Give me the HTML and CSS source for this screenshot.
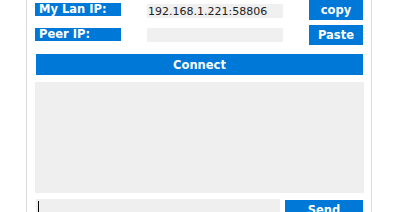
FILE: index.html
```html
<!DOCTYPE html>
<html lang="en">
<head>
  <meta charset="UTF-8" />
  <meta name="viewport" content="width=device-width, initial-scale=1.0" />
  <title>LAN Chat</title>
  <link rel="stylesheet" href="styles.css">
</head>
<body>
  <div class="panel">
    <!-- address rows -->
    <div class="row">
      <span class="label">My Lan IP:</span>
      <input class="field" id="myIp" type="text" value="192.168.1.221:58806" readonly>
      <button class="btn">copy</button>
    </div>
    <div class="row">
      <span class="label">Peer IP:</span>
      <input class="field" id="peerIp" type="text">
      <button class="btn">Paste</button>
    </div>

    <button class="btn connect">Connect</button>

    <div class="messages" id="messages"></div>

    <!-- compose -->
    <div class="compose">
      <div class="msg-input"><span class="caret"></span></div>
      <button class="btn send">Send</button>
    </div>
  </div>
</body>
</html>
```

FILE: styles.css
```css
html, body {
  margin: 0;
  padding: 0;
  overflow: hidden;
  background: #fff;
}
body {
  font-family: 'DejaVu Sans', Verdana, sans-serif;
  font-size: 11px;
}
.panel {
  width: 328px;
  margin-left: 26px;
  padding: 0 8px 20px 8px;
  border-left: 1px solid #dcdcdc;
  border-right: 1px solid #dcdcdc;
}
.row {
  display: grid;
  grid-template-columns: 86px 136px 54px;
  column-gap: 26px;
  height: 20px;
  margin-bottom: 5px;
}
.label {
  align-self: start;
  margin-top: 3px;
  height: 13px;
  line-height: 13px;
  padding-left: 4px;
  background: #0078d7;
  color: #fff;
  font-weight: bold;
  font-size: 11.5px;
}
.field {
  align-self: start;
  margin: 4px 0 0;
  height: 14px;
  padding: 0 1px;
  border: none;
  outline: none;
  background: #f0f0f0;
  color: #222;
  font-family: inherit;
  font-size: 11px;
}
.row + .row .field {
  margin-top: 3px;
}
.btn {
  height: 20px;
  padding: 0;
  border: none;
  background: #0078d7;
  color: #fff;
  font-family: inherit;
  font-weight: bold;
  font-size: 11.5px;
  cursor: pointer;
}
.connect {
  display: block;
  width: 327px;
  height: 21px;
  margin: 9px 0 0 1px;
}
.messages {
  height: 111px;
  margin: 7px -1px 0 0;
  background: #efefef;
}
.compose {
  display: flex;
  margin-top: 6px;
  gap: 5px;
}
.msg-input {
  width: 244px;
  height: 20px;
  margin-left: 1px;
  background: #efefef;
}
.caret {
  display: block;
  width: 1px;
  height: 14px;
  margin: 2px 0 0 2px;
  background: #000;
}
.send {
  width: 78px;
  margin-top: 1px;
}
```
